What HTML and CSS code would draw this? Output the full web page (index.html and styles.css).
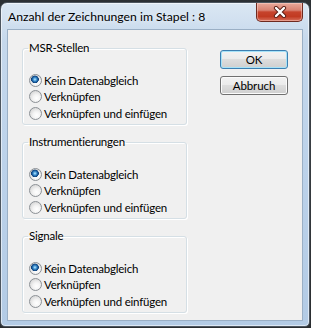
FILE: index.html
```html
<!DOCTYPE html>
<html lang="de">
<head>
<meta charset="utf-8">
<link rel="stylesheet" href="styles.css">
</head>
<body>
<div class="window">
  <div class="titlebar">
    <span class="title">Anzahl der Zeichnungen im Stapel : 8</span>
    <button class="close" aria-label="Schließen">
      <svg width="14" height="12" viewBox="0 0 14 12">
        <path d="M3 2 L11 10 M11 2 L3 10" stroke="#5a1c14" stroke-width="4.2" stroke-linecap="round" fill="none"/>
        <path d="M3 2 L11 10 M11 2 L3 10" stroke="#ffffff" stroke-width="2.4" stroke-linecap="round" fill="none"/>
      </svg>
    </button>
  </div>
  <div class="client">
    <div class="groups">
      <fieldset class="group">
        <legend>MSR-Stellen</legend>
        <label class="opt"><span class="radio checked"></span>Kein Datenabgleich</label>
        <label class="opt"><span class="radio"></span>Verknüpfen</label>
        <label class="opt"><span class="radio"></span>Verknüpfen und einfügen</label>
      </fieldset>
      <fieldset class="group">
        <legend>Instrumentierungen</legend>
        <label class="opt"><span class="radio checked"></span>Kein Datenabgleich</label>
        <label class="opt"><span class="radio"></span>Verknüpfen</label>
        <label class="opt"><span class="radio"></span>Verknüpfen und einfügen</label>
      </fieldset>
      <fieldset class="group">
        <legend>Signale</legend>
        <label class="opt"><span class="radio checked"></span>Kein Datenabgleich</label>
        <label class="opt"><span class="radio"></span>Verknüpfen</label>
        <label class="opt"><span class="radio"></span>Verknüpfen und einfügen</label>
      </fieldset>
    </div>
    <div class="buttons">
      <button class="btn default">OK</button>
      <button class="btn">Abbruch</button>
    </div>
  </div>
</div>
</body>
</html>
```
FILE: styles.css
```css
* { box-sizing: border-box; }
html, body {
  margin: 0;
  padding: 0;
}
body {
  width: 311px;
  height: 328px;
  overflow: hidden;
  background: linear-gradient(#2c3034, #3a3f44 40%, #2a2d30);
  font-family: Lato, "Noto Sans", sans-serif;
  font-size: 11.5px;
  letter-spacing: -0.2px;
  color: #000;
}
.window {
  margin-top: 2px;
  width: 310px;
  height: 325px;
  border: 1px solid #4d5660;
  border-radius: 7px 7px 5px 5px;
  background: linear-gradient(180deg, #dbe7f3 0%, #c5d8ec 12%, #bcd2ea 50%, #b3cbe5 100%);
  box-shadow: inset 0 0 0 1px rgba(255,255,255,0.55);
  display: flex;
  flex-direction: column;
}
.titlebar {
  height: 26px;
  display: flex;
  justify-content: space-between;
  align-items: flex-start;
  padding-left: 7px;
  padding-right: 6px;
}
.title {
  margin-top: 6px;
  font-size: 12.2px;
  letter-spacing: 0;
  line-height: 16px;
  color: #000;
  text-shadow: 0 0 6px rgba(255,255,255,0.9);
}
.close {
  width: 47px;
  height: 19px;
  margin: 0;
  padding: 0;
  border: 1px solid #6e2a20;
  border-top: none;
  border-radius: 0 0 5px 5px;
  background: linear-gradient(180deg, #e9a99b 0%, #d88171 40%, #c6432c 50%, #c13a22 75%, #d7705c 100%);
  box-shadow: inset 0 0 0 1px rgba(255,220,210,0.45);
  display: flex;
  align-items: center;
  justify-content: center;
}
.client {
  flex: 1;
  margin: 0 6px 5px 6px;
  border: 1px solid #9aafc5;
  background: #f0f0f0;
  display: flex;
  padding: 11px 14px 0 14px;
  gap: 33px;
}
.groups {
  width: 165px;
  display: flex;
  flex-direction: column;
  gap: 10px;
}
.group {
  margin: 0;
  height: 84px;
  padding: 0 0 0 5px;
  border: 1px solid #d5dfe5;
  border-radius: 3px;
  box-shadow: 1px 1px 0 #ffffff inset, 1px 1px 0 #ffffff;
}
.group legend {
  padding: 0 1px;
  margin: 0;
  line-height: 14px;
}
.opt {
  display: flex;
  align-items: center;
  height: 16.5px;
  white-space: nowrap;
  gap: 2px;
  margin-left: 1px;
}
.opt:first-of-type {
  margin-top: 17px;
}
.radio {
  width: 13px;
  height: 13px;
  flex: none;
  border-radius: 50%;
  border: 1px solid #8c9196;
  background: radial-gradient(circle at 60% 65%, #ffffff 0%, #f4f4f4 35%, #d6d6d6 80%, #cfcfcf 100%);
}
.radio.checked {
  background:
    radial-gradient(circle at 45% 40%, #c8ecff 0, #56a8e0 1.3px, #1f64a6 2.6px, #0d3f78 3.6px, rgba(13,63,120,0) 4.1px),
    radial-gradient(circle at 60% 65%, #ffffff 0%, #f4f4f4 35%, #d6d6d6 80%, #cfcfcf 100%);
}
.buttons {
  margin-top: 9px;
  display: flex;
  flex-direction: column;
  gap: 7px;
}
.btn {
  width: 68px;
  height: 19px;
  margin: 0;
  padding: 0;
  font-family: inherit;
  font-size: 11.5px;
  letter-spacing: -0.1px;
  line-height: 16px;
  color: #000;
  border: 1px solid #707070;
  border-radius: 3px;
  background: linear-gradient(180deg, #f2f2f2 0%, #ebebeb 49%, #dddddd 50%, #cfcfcf 100%);
  box-shadow: inset 0 0 0 1px #fbfbfb;
}
.btn.default {
  border-color: #3c7fb1;
  box-shadow: inset 0 0 0 1px #a6e2f8;
}
```
